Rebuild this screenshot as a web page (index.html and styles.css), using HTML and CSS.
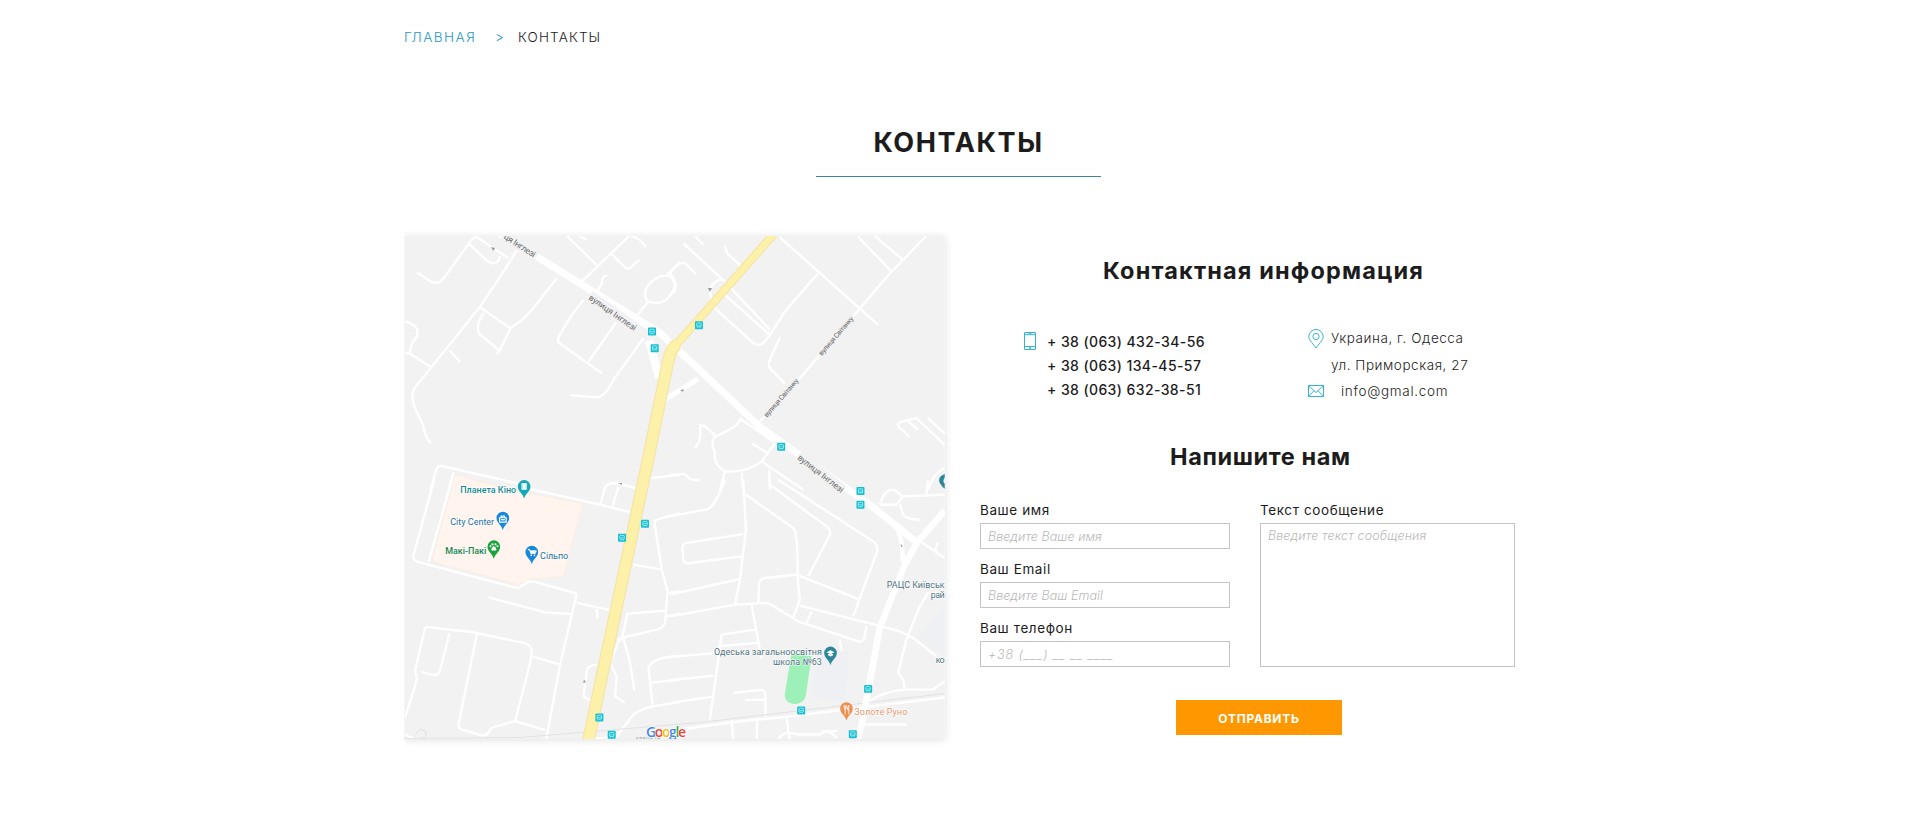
FILE: index.html
```html
<!DOCTYPE html>
<html lang="ru">
<head>
<meta charset="utf-8">
<title>Контакты</title>
<link rel="stylesheet" href="styles.css">
</head>
<body>
<main class="page">
  <nav class="crumbs">
    <a class="crumb-link" href="#">ГЛАВНАЯ</a>
    <span class="crumb-sep">&gt;</span>
    <span class="crumb-current">КОНТАКТЫ</span>
  </nav>
  <h1 class="title">КОНТАКТЫ</h1>
  <div class="columns">
    <svg class="map" viewBox="404 236 541 503.500" width="541" height="503">
      <defs>
        <g id="stop"><rect x="-12" y="-12" width="24" height="24" rx="3" fill="#10bfd0"/><rect x="-6.500" y="-7" width="13" height="12" rx="2" fill="none" stroke="#e6fbfd" stroke-width="2"/><path d="M-5 0H5M-5 7V9M5 7V9" stroke="#e6fbfd" stroke-width="1.600"/></g>
        <path id="pin" d="M0 33C-3 17-19 11-19-4A19 19 0 0 1 19-4C19 11 3 17 0 33Z"/>
      </defs>
      <rect x="404" y="236" width="541" height="504" fill="#f2f2f2"/>

      <!-- areas -->
      <g transform="translate(400 480) scale(.33333)">
        <path d="M165-15 330 30 548 72 490 290 395 298 355 315 95 245Z" fill="#fff5ee" stroke="#fdeadb" stroke-width="2"/>
      </g>
      <g transform="translate(670 480) scale(.33333)">
        <path d="M365 522 425 530 408 648C400 685 340 680 345 642Z" fill="#9df0b8"/>
        <path d="M440 520 538 515 525 665 425 650ZM825 370 745 480 825 525Z" fill="#eef0f3"/>
      </g>

      <!-- minor streets -->
      <g class="road">
        <g transform="translate(400 230) scale(.33333)">
          <path d="M215 28 130 145Q115 165 92 155L50 127M215 28 228 20 325 85M207 42 260 92Q280 108 295 93L300 78M350 60 320 110 240 230 95 410 45 472Q35 485 37 510 40 530 68 585 75 625 92 640M470 145 395 240Q370 270 330 295L240 232M250 250Q225 285 237 312L298 362 330 298M298 362 290 372M15 275Q60 285 50 320L35 340 28 370 92 412M15 368 28 372M148 362 180 396M500 18 590 105M540 20 560 28M690 15 535 165M690 15 720 30 738 52M635 72 670 108Q685 125 700 105L718 90M622 138Q605 135 605 160L590 190M550 210 515 255 477 318Q468 335 485 345L605 430M565 395 665 255 660 225M730 325 640 450Q615 505 585 502L510 496M700 270 745 215M745 215Q725 195 745 165 775 130 810 140 835 160 815 190 790 230 745 215M800 135 840 95M90 780 110 715Q115 705 130 710L370 765M145 780 160 728M750 745 840 735M610 780Q620 755 655 762L710 775"/>
        </g>
        <g transform="translate(670 230) scale(.33333)">
          <path d="M40 40 165 155 300 300M75 18 100 45M165 50 172 70 215 110M0 130Q35 80 55 110L78 133M0 195Q35 175 0 130M125 210Q110 170 145 150L165 150M130 230 245 335Q265 355 285 335L300 315 345 245 445 130M165 195 300 315M330 22 625 285M770 18 665 125 390 445 270 575M565 20 665 125M615 18 700 90M330 322 300 390Q290 410 310 425L345 462M215 565 195 590 135 622M75 655Q95 635 90 585L105 590 135 615Q120 640 135 670 130 705 165 725 230 730 275 695L315 640M215 570 310 635M245 640 290 668M165 725 150 780M215 730 220 780M275 695 400 780M300 780 298 720M0 735 45 733 60 748 90 752M720 622 690 595Q675 580 700 575L740 565 825 645M710 570 745 600M775 565 825 612M775 780Q790 730 825 715"/>
        </g>
        <g transform="translate(400 480) scale(.33333)">
          <path d="M102 0 40 225Q35 240 55 247L350 325Q360 325 370 315 385 302 405 307L530 342M155 0 85 247M390 28 600 75 690 97M600 75 615 25Q625 5 655 10L705 24M638 78 655 22M265 353 435 398 515 403M530 342 480 555 438 780M530 370 635 392M590 388 592 415M75 442 45 570 50 600 15 712M75 442 220 458 370 490Q395 495 395 520L390 550 345 725M395 530 480 555M148 460 120 570Q115 590 95 585L65 578M230 463 175 735Q173 745 185 750L245 768Q260 770 268 755 272 742 290 740L345 725 435 752M700 255 785 270M840 100 770 120Q762 122 765 140L785 270 803 335 795 430Q790 445 770 450L655 477 665 480 682 402 795 393M803 340 840 335M800 410 840 402M660 475 630 550 650 590 645 650 675 670M670 475 690 550 703 632M590 555Q565 555 560 575L550 650 570 662M840 530Q760 530 745 565L758 675M750 610 840 600M840 668 760 680Q720 690 700 705L650 770 585 778M15 765 45 780"/>
          <path d="M60 780Q85 770 75 755L60 750 45 765" stroke="#dedede" stroke-width="3"/>
        </g>
        <g transform="translate(670 480) scale(.33333)">
          <path d="M165 0Q140 70 115 88L0 110M220 0 228 150 210 300 195 375M228 45 370 145Q385 155 383 290L390 360 370 415M298 0 300 15 470 140Q485 150 480 165L415 290M325 0 610 185Q625 195 622 215L550 410M220 163 45 190Q35 195 38 215L40 240Q42 255 60 250L215 230M210 298 0 345M265 370 268 310Q268 298 285 295L380 285 570 360M0 410 195 375 295 370 385 425 570 487Q580 487 585 470L590 440M390 378 635 440 690 455 730 475 800 530M425 395 410 430M245 375 268 500M268 500 275 538M255 450 155 465 120 720M145 500 265 490M0 532 145 520M0 602 130 588M0 670 125 652M190 640 270 632Q285 630 286 645L287 710M225 662 285 660M630 75 640 50Q665 10 695 50L825 45M630 75 680 75 700 50M690 75 700 105Q710 120 750 120M775 0 770 45M745 180 825 235M795 215 805 188M825 340 775 340 750 380 710 480 685 580 700 600 705 630M185 720 190 780M262 720 260 780M350 712 355 750 360 780M325 780Q340 750 385 765L450 765Q475 745 500 775M510 480 515 515M575 735H710M455 755 500 755M825 605 790 630 705 630Q640 635 600 665"/>
        </g>
      </g>
      <path d="M404 739 520 738 700 723 945 694" fill="none" stroke="#e2e2e2" stroke-width="1"/>
      <path d="M675 731Q730 722 780 718L870 707 945 698" fill="none" stroke="#fff" stroke-width="2.600"/>

      <!-- main streets -->
      <g class="avenue">
        <path d="M500 234 660 333 760 427 870 505 915 541" stroke-width="7"/>
        <path d="M649 341 659 378" stroke-width="8"/>
        <path d="M663 401 698 379" stroke-width="5"/>
        <path d="M945 511 918 542 905 565 880 628 862 725 858 740" stroke-width="6.500"/>
        <path d="M893 524Q903 532 903 562" stroke-width="4.500"/>
      </g>
      <path d="M774 234 676 345" class="highway-edge" stroke-width="8.500"/>
      <path d="M677 344Q670 350 668 362L649 455 588 742" class="highway-edge" stroke-width="12.500"/>
      <path d="M774 234 676 345" class="highway" stroke-width="6.500"/>
      <path d="M677 344Q670 350 668 362L649 455 588 742" class="highway" stroke-width="10.500"/>

      <!-- street names -->
      <g fill="#686868" class="label">
        <rect x="-2" y="-9" width="40" height="12" fill="#f2f2f2" transform="translate(503 238) rotate(33)"/>
        <rect x="-1" y="-9" width="57" height="12" fill="#f2f2f2" transform="translate(588 299) rotate(35)"/>
        <rect x="-1" y="-9" width="57" height="12" fill="#f2f2f2" transform="translate(797 459) rotate(38)"/>
        <text transform="translate(503 238) rotate(33)" font-size="8.500" textLength="36">ця Інглезі</text>
        <text transform="translate(588 299) rotate(35)" font-size="8.500" textLength="56">вулиця Інглезі</text>
        <text transform="translate(797 459) rotate(38)" font-size="8.500" textLength="56">вулиця Інглезі</text>
        <g font-size="7">
          <rect x="-1" y="-7" width="51" height="9" fill="#f2f2f2" transform="translate(822 356) rotate(-49)"/>
          <rect x="-1" y="-7" width="51" height="9" fill="#f2f2f2" transform="translate(767 418) rotate(-49)"/>
          <text transform="translate(822 356) rotate(-49)" textLength="49">вулиця Світанку</text>
          <text transform="translate(767 418) rotate(-49)" textLength="49">вулиця Світанку</text>
        </g>
      </g>
      <g fill="#999">
        <path d="M491 247l4 1-2 3ZM708 288l4 0-2 4ZM680 391l4-2-1 3ZM618 484l4-1 0 2ZM584 680l2 3-3 0ZM901 544l2 3-2 0Z"/>
      </g>

      <!-- bus stops -->
      <g transform="translate(400 230) scale(.33333)">
        <use href="#stop" x="756" y="305"/><use href="#stop" x="764" y="355"/>
        <use href="#stop" x="897" y="286"/><use href="#stop" x="1144" y="651"/>
        <use href="#stop" x="1382" y="784"/><use href="#stop" x="1382" y="825"/>
        <use href="#stop" x="735" y="882"/><use href="#stop" x="666" y="924"/>
        <use href="#stop" x="598" y="1464"/><use href="#stop" x="635" y="1516"/>
        <use href="#stop" x="1204" y="1443"/><use href="#stop" x="1405" y="1378"/>
        <use href="#stop" x="1359" y="1514"/>
      </g>

      <!-- places -->
      <g transform="translate(400 480) scale(.33333)">
        <use href="#pin" x="372" y="24" fill="#14a9b5"/><path d="M364 10h16v20h-16Z" fill="#fff"/><path d="M367 12v17M377 12v17" stroke="#9adbe0" stroke-width="2"/>
        <use href="#pin" x="308" y="119" fill="#1588dc"/><path d="M298 114h20v13h-20ZM303 114v-5h10v5" fill="none" stroke="#fff" stroke-width="3.500"/><path d="M302 120h12" stroke="#fff" stroke-width="4"/>
        <use href="#pin" x="281" y="205" fill="#18a33b"/><g fill="#fff"><circle cx="271" cy="200" r="3"/><circle cx="277" cy="194" r="3.200"/><circle cx="286" cy="194" r="3.200"/><circle cx="292" cy="200" r="3"/><path d="M281 199q8 5 8 12-4 4-8 1-4 3-8-1 0-7 8-12Z"/></g>
        <use href="#pin" x="395" y="221" fill="#1588dc"/><path d="M383 209h5l4 13h13l4-9h-19Z" fill="#fff" stroke="#fff" stroke-width="2"/><circle cx="393" cy="227" r="2.500" fill="#fff"/><circle cx="403" cy="227" r="2.500" fill="#fff"/>
      </g>
      <g transform="translate(670 480) scale(.33333)">
        <use href="#pin" x="482" y="524" fill="#2d8798"/><path d="M470 518l12-6 12 6-12 6ZM475 523v5q7 5 14 0v-5" fill="#fff"/>
        <use href="#pin" x="530" y="691" fill="#ee8e50"/><path d="M523 677v9q0 4 3 4v15M529 677v9q0 4-3 4M526 677v12M537 705v-28q-4 3-4 14h4" fill="none" stroke="#fff" stroke-width="2.500"/>
        <path d="M825-17Q808-11 808 2 809 13 825 27V12Q817 5 825-7Z" fill="#2d8798"/>
      </g>
      <g class="label place">
        <text x="460" y="493" fill="#128c94" textLength="56" font-weight="500">Планета Кіно</text>
        <text x="450" y="525" fill="#23719f" textLength="44">City Center</text>
        <text x="445" y="554" fill="#188148" textLength="41" font-weight="500">Макі-Пакі</text>
        <text x="540" y="559" fill="#23719f" textLength="28">Сільпо</text>
        <g fill="#4d7280">
          <text x="714" y="655" textLength="108">Одеська загальноосвітня</text>
          <text x="773" y="665" textLength="49">школа №63</text>
          <text x="887" y="588" textLength="58">РАЦС Київськ</text>
          <text x="931" y="598" textLength="14">рай</text>
          <text x="936" y="663" textLength="9">ко</text>
        </g>
        <text x="854.500" y="715" fill="#e29a70" textLength="53">Золоте Руно</text>
      </g>
      <text x="636" y="741" font-size="5" class="label" fill="#999" textLength="24">улиця Ін</text>
      <text x="646" y="737" class="google" textLength="40"><tspan fill="#4285f4">G</tspan><tspan fill="#ea4335">o</tspan><tspan fill="#fbbc05">o</tspan><tspan fill="#4285f4">g</tspan><tspan fill="#34a853">l</tspan><tspan fill="#ea4335">e</tspan></text>
    </svg>

    <section class="info">
      <h2 class="subtitle">Контактная информация</h2>
      <div class="contacts">
        <div class="phones">
          <svg class="icon-phone" width="12" height="18" viewBox="0 0 12 18"><path d="M.5.5h11v17H.5ZM.5 2.700h11M.5 14.500h11M4.500 1.700h3" /><circle cx="6" cy="16" r=".7"/></svg>
          <ul class="phone-list">
            <li>+ 38 (063) 432-34-56</li>
            <li>+ 38 (063) 134-45-57</li>
            <li>+ 38 (063) 632-38-51</li>
          </ul>
        </div>
        <div class="address">
          <svg class="icon-pin" width="16" height="20" viewBox="0 0 16 20"><path d="M8 19C6 15.500.8 11.500.8 7.700A7.200 7.200 0 0 1 15.200 7.700C15.200 11.500 10 15.500 8 19Z"/><circle cx="8" cy="7.500" r="3.100"/></svg>
          <div class="place-lines"><div>Украина, г. Одесса</div><div>ул. Приморская, 27</div></div>
          <svg class="icon-mail" width="16" height="12" viewBox="0 0 16 12"><path d="M.5.5h15v11H.5ZM.5.5 8 7.500 15.500.5M.5 11.500 6 5.700M15.500 11.500 10 5.700"/></svg>
          <div class="email">info@gmal.com</div>
        </div>
      </div>
      <h2 class="subtitle write">Напишите нам</h2>
      <form class="form">
        <div class="fields">
          <label for="name">Ваше имя</label>
          <input id="name" placeholder="Введите Ваше имя">
          <label for="email">Ваш Email</label>
          <input id="email" placeholder="Введите Ваш Email">
          <label for="phone">Ваш телефон</label>
          <input class="phone-input" id="phone" placeholder="+38 (___) __ __ ____">
        </div>
        <div class="fields">
          <label for="message">Текст сообщение</label>
          <textarea id="message" placeholder="Введите текст сообщения"></textarea>
        </div>
      </form>
      <button class="send" type="button">ОТПРАВИТЬ</button>
    </section>
  </div>
</main>
</body>
</html>
```
FILE: styles.css
```css
* { box-sizing: border-box; }
body { margin: 0; background: #fff; color: #1c1c1c; font-family: Inter, "Open Sans", sans-serif; }
.page { width: 1112px; height: 833px; margin: 0 auto; padding-top: 27px; overflow: hidden; }
.crumbs { display: flex; height: 20px; font-size: 13.500px; line-height: 20px; font-weight: 300; white-space: nowrap; }
.crumb-link { width: 91px; color: #2398c5; text-decoration: none; letter-spacing: 1.500px; }
.crumb-sep { width: 23px; color: #2398c5; }
.crumb-current { letter-spacing: 1.150px; }
.title { width: 285px; height: 61px; margin: 69px 0 0 412px; border-bottom: 1px solid #3a87a3; padding-top: 10px; text-align: center; font-size: 27px; line-height: 34px; font-weight: 700; letter-spacing: 1.600px; }
.columns { display: flex; gap: 35px; margin-top: 59px; align-items: flex-start; }
.map { flex: none; display: block; box-shadow: 0 1px 8px rgba(0,0,0,.12); }
.road { fill: none; stroke: #fff; stroke-width: 7; stroke-linejoin: round; }
.avenue { fill: none; stroke: #fff; stroke-linejoin: round; }
.highway { fill: none; stroke: #fdf0a8; }
.highway-edge { fill: none; stroke: #f3e3a4; }
.label { font-family: Roboto, sans-serif; }
.place { font-size: 9px; paint-order: stroke; stroke: #fff; stroke-width: 1px; }
.google { font: 600 14px "Open Sans", sans-serif; paint-order: stroke; stroke: #fff; stroke-width: 1.500px; }
.info { width: 536px; padding-top: 19px; }
.subtitle { width: 322px; margin: 0 0 0 123px; font-size: 23.500px; line-height: 32px; font-weight: 700; letter-spacing: 1.150px; white-space: nowrap; }
.contacts { display: flex; height: 86px; margin: 41px 0 0 44px; }
.contacts svg { fill: none; stroke: #35b3d0; stroke-width: 1; }
.phones { display: flex; gap: 11px; width: 284px; }
.icon-phone { margin-top: 4px; }
.phone-list { margin: 2px 0 0; padding: 0; list-style: none; height: 72px; font-size: 14px; line-height: 24px; font-weight: 500; letter-spacing: .400px; white-space: nowrap; }
.address { display: grid; grid-template-columns: 16px 1fr; column-gap: 7px; grid-template-rows: 52px 26px; font-size: 13.500px; font-weight: 300; line-height: 27px; letter-spacing: .550px; white-space: nowrap; }
.icon-pin { margin-top: 1px; }
.place-lines { margin-top: -3px; }
.icon-mail { margin-top: 5px; }
.email { padding-left: 10px; line-height: 22px; letter-spacing: .700px; }
.write { margin: 27px 0 0 190px; letter-spacing: .600px; }
.form { display: grid; grid-template-columns: 250px 255px; gap: 30px; margin-top: 28px; }
.fields { display: flex; flex-direction: column; align-items: stretch; }
.fields label { height: 22px; margin-top: 11px; align-self: flex-start; font-size: 13.500px; line-height: 18px; letter-spacing: .600px; white-space: nowrap; }
.fields label:first-child { margin-top: 0; }
.fields input, .fields textarea { display: block; width: 100%; height: 26px; margin: 0; border: 1px solid #c4c4c4; border-radius: 0; padding: 0 7px; background: #fff; font: italic 300 12.500px/24px Inter, sans-serif; letter-spacing: .050px; outline: 0; }
.fields .phone-input { letter-spacing: .900px; }
.fields textarea { height: 144px; letter-spacing: .120px; resize: none; }
::placeholder { color: #b8b8b8; opacity: 1; }
.send { display: block; width: 166px; height: 35px; margin: 33px 0 0 196px; border: 0; padding: 0; background: #ff9800; color: #fff; font: 700 12px/37px Inter, sans-serif; letter-spacing: .750px; }
```
